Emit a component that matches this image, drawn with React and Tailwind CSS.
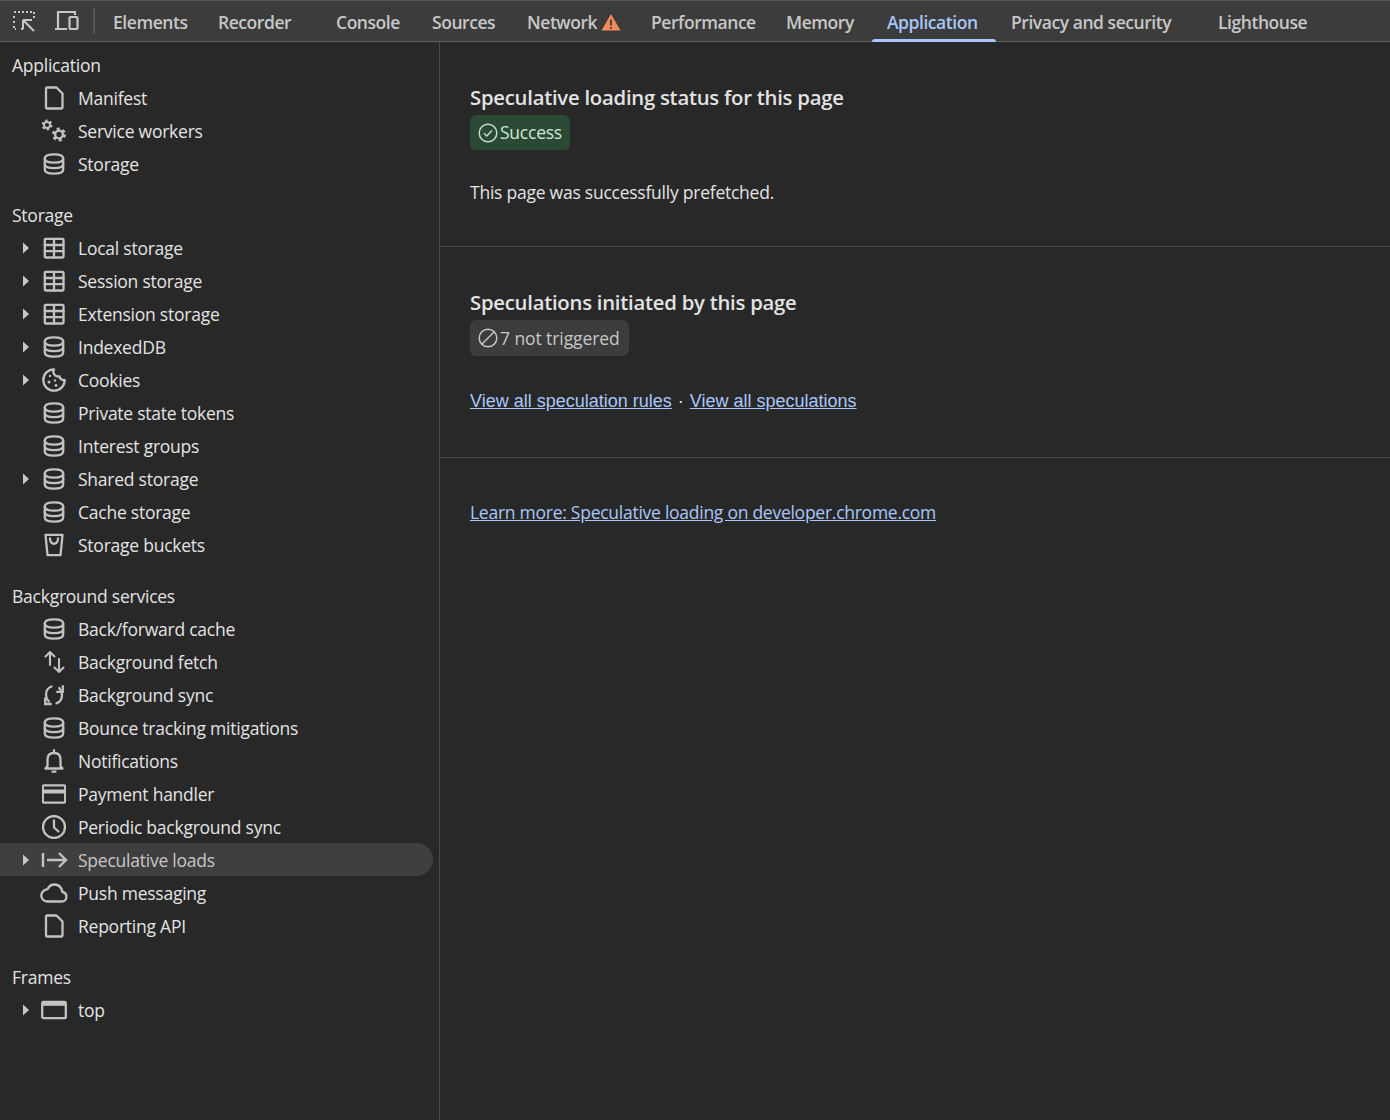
import React from "react";

const S = ({ children, w = 24, h = 24, className = "" }) => (
  <svg width={w} height={h} viewBox="0 0 24 24" fill="none" stroke="#c2c2c2" strokeWidth="2.300" strokeLinecap="round" strokeLinejoin="round" className={className}>
    {children}
  </svg>
);

const File = () => (
  <S><path d="M4 2.500a1 1 0 0 1 1-1h9.500L20.500 7.500V21.500a1 1 0 0 1-1 1H5a1 1 0 0 1-1-1z" /></S>
);
const Gear = ({ cx, cy, R }) => {
  const teeth = 2 * Math.PI * 0.82 * R / 6;
  return (
    <g>
      <circle cx={cx} cy={cy} r={R * 0.55} strokeWidth={R * 0.34} />
      <circle cx={cx} cy={cy} r={R * 0.82} strokeWidth={R * 0.36} strokeDasharray={`${teeth * 0.5} ${teeth * 0.5}`} strokeLinecap="butt" />
    </g>
  );
};
const Gears = () => (
  <S><Gear cx={5} cy={6} R={5.500} /><Gear cx={17} cy={15.500} R={7} /></S>
);
const Db = () => (
  <S>
    <path d="M2.800 6.500C2.800 3.800 7 2.300 12 2.300S21.200 3.800 21.200 6.500v11c0 2.700-4.200 4.200-9.200 4.200s-9.200-1.500-9.200-4.200z" />
    <path d="M2.800 6.500c0 2.700 4.200 4.200 9.200 4.200s9.200-1.500 9.200-4.200" />
    <path d="M2.800 12c0 2.700 4.200 4.200 9.200 4.200s9.200-1.500 9.200-4.200" />
  </S>
);
const Table = () => (
  <S>
    <rect x="2.800" y="2.800" width="18.700" height="18.700" rx="1" />
    <path d="M2.800 9h18.700M2.800 15.200h18.700M12 2.800v18.700" />
  </S>
);
const Cookie = () => (
  <S>
    <path d="M12 1.300a10.700 10.700 0 1 0 10.700 10.700 4.500 4.500 0 0 1-5.300-3.700 4.800 4.800 0 0 1-5.400-7z" />
    <circle cx="8" cy="8" r="1.200" fill="#c2c2c2" stroke="none" />
    <circle cx="7" cy="14" r="1.500" fill="#c2c2c2" stroke="none" />
    <circle cx="13" cy="12.500" r="1.200" fill="#c2c2c2" stroke="none" />
    <circle cx="14" cy="17.500" r="1.400" fill="#c2c2c2" stroke="none" />
  </S>
);
const Bucket = () => (
  <S>
    <path d="M3.500 1.800h17l-2 20.400H5.500z" />
    <path d="M8 5.500c0 7 8 7 8 0" />
  </S>
);
const UpDown = () => (
  <S>
    <path d="M8 15V2M3.500 6.500 8 2 12.500 6.500" strokeWidth="2.100" />
    <path d="M17 9v13M12.500 17.500 17 22l4.500-4.500" strokeWidth="2.100" />
  </S>
);
const Sync = () => (
  <S>
    <path d="M9.500 3.500C6 4.800 4 7.800 4 11.500c0 2.500.9 5 2.800 7" />
    <path d="M3.200 14.500v6.500h6.500" strokeLinejoin="miter" strokeLinecap="butt" />
    <path d="M14.500 20.300c3.500-1.300 5.500-4.500 5.500-8.300 0-2.500-.9-5-2.800-7" />
    <path d="M20.800 2.300v6.500h-6.500" strokeLinejoin="miter" strokeLinecap="butt" />
  </S>
);
const Bell = () => (
  <S>
    <path d="M3.500 19.500h17l-2-2.500v-6.500C18.500 6.500 16 4 12 4s-6.500 2.500-6.500 6.500V17z" />
    <path d="M12 1.200V4M10.500 22.700h3" />
  </S>
);
const Card = () => (
  <S>
    <rect x="0.800" y="3.300" width="22.400" height="17.400" rx="1.500" />
    <path d="M0.800 9.500h22.400" strokeWidth="4" strokeLinecap="butt" />
  </S>
);
const Clock = () => (
  <S>
    <circle cx="12" cy="12" r="11" />
    <path d="M12 5.500v7l4.500 4" />
  </S>
);
const Spec = () => (
  <svg width="28" height="24" viewBox="0 0 28 24" fill="none" stroke="#c2c2c2" strokeWidth="2.400" strokeLinecap="butt" strokeLinejoin="miter">
    <path d="M3 5v14M7 12h18.500M19 5l7 7-7 7" />
  </svg>
);
const Cloud = () => (
  <svg width="28" height="24" viewBox="0 0 28 24" fill="none" stroke="#c2c2c2" strokeWidth="2.300" strokeLinejoin="round">
    <path d="M7 20.500h15a4.800 4.800 0 0 0 .5-9.500C21.500 6.500 18.500 3.500 14.500 3.500c-3 0-5.500 1.700-7 4.700C4 9 1.300 11 1.300 14.800 1.300 17.800 4 20.500 7 20.500z" />
  </svg>
);
const Frame = () => (
  <svg width="26" height="24" viewBox="0 0 26 24" fill="none" stroke="#c2c2c2" strokeWidth="2.300" strokeLinejoin="round">
    <rect x="1.200" y="3.800" width="23.600" height="16.400" rx="1.500" />
    <path d="M1.200 6.300h23.600" strokeWidth="3" />
  </svg>
);
const Arrow = () => (
  <svg width="8" height="12" viewBox="0 0 8 12"><path d="M1 0.500 7 6 1 11.500z" fill="#c7c7c7" /></svg>
);

const groups = [
  { title: "Application", rows: [["Manifest", File], ["Service workers", Gears], ["Storage", Db]] },
  {
    title: "Storage",
    rows: [
      ["Local storage", Table, 1], ["Session storage", Table, 1], ["Extension storage", Table, 1],
      ["IndexedDB", Db, 1], ["Cookies", Cookie, 1], ["Private state tokens", Db],
      ["Interest groups", Db], ["Shared storage", Db, 1], ["Cache storage", Db], ["Storage buckets", Bucket],
    ],
  },
  {
    title: "Background services",
    rows: [
      ["Back/forward cache", Db], ["Background fetch", UpDown], ["Background sync", Sync],
      ["Bounce tracking mitigations", Db], ["Notifications", Bell], ["Payment handler", Card],
      ["Periodic background sync", Clock], ["Speculative loads", Spec, 1, 1], ["Push messaging", Cloud], ["Reporting API", File],
    ],
  },
  { title: "Frames", rows: [["top", Frame, 1]] },
];

const tabs = [
  ["Elements", "w-[105px]"],
  ["Recorder", "w-[118px]"],
  ["Console", "w-[96px]"],
  ["Sources", "w-[95px]"],
  ["Network", "w-[124px]"],
  ["Performance", "w-[135px]"],
  ["Memory", "w-[101px]"],
  ["Application", "w-[124px]"],
  ["Privacy and security", "w-[207px]"],
  ["Lighthouse", "w-[130px]"],
];

function Tabs() {
  return (
    <div className="flex h-[42px] items-center bg-[#3c3c3c] border-t border-b border-t-[#555555] border-b-[#5e5e5e] text-[#c7c7c7] text-[17.500px] font-semibold tracking-[-0.45px]">
      <div className="ml-[12px] flex items-center">
        <svg width="24" height="24" viewBox="0 0 24 24" fill="none" stroke="#c7c7c7" strokeWidth="2">
          <path d="M2 3h20v6M2 7v2M2 12v2M2 17v3h2M9 20h2" strokeDasharray="2 2" />
          <path d="M11 11h9M11 11v9M11 11l11 11" />
        </svg>
      </div>
      <div className="ml-[18px] flex items-center">
        <svg width="26" height="24" viewBox="0 0 26 24" fill="none" stroke="#c7c7c7" strokeWidth="2.200">
          <path d="M4 20V3h17v3M1 20h12" />
          <rect x="15.500" y="8" width="8" height="12" rx="1" />
        </svg>
      </div>
      <div className="ml-[13px] mr-[3px] h-[26px] w-[2px] bg-[#555555]" />
      {tabs.map(([t, w]) => {
        const on = t === "Application";
        return (
          <div key={t} className={`relative flex h-full items-center pl-[15px] pt-[2px] ${w} ${on ? "text-[#a8c7fa]" : ""}`}>
            <span className="whitespace-nowrap">{t}</span>
            {t === "Network" && (
              <svg width="20" height="18" viewBox="0 0 20 18" className="ml-[4px]">
                <path d="M10 1 19.500 17.500H.5z" fill="#f28b5c" />
                <path d="M10 6.500v6M10 14v1.800" stroke="#3c3c3c" strokeWidth="1.800" />
              </svg>
            )}
            {on && <div className="absolute bottom-[-1px] left-0 right-0 h-[3px] rounded-t-[3px] bg-[#a8c7fa]" />}
          </div>
        );
      })}
    </div>
  );
}

function Sidebar() {
  return (
    <aside className="w-[440px] shrink-0 border-r border-[#4a4a4a] pt-[6px] text-[#e3e3e3]">
      {groups.map((g) => (
        <section key={g.title} className="mb-[18px]">
          <div className="flex h-[33px] items-center pl-[12px] pt-[2px]">{g.title}</div>
          {g.rows.map(([label, Icon, arrow, selected]) => (
            <div key={label} className={`flex h-[33px] items-center mr-[6px] rounded-r-full ${selected ? "bg-[#3f3f3f] text-[#c7c7c7]" : ""}`}>
              <span className="flex w-[40px] justify-center pl-[11px]">{arrow ? <Arrow /> : null}</span>
              <span className="flex w-[28px] justify-center">
                <Icon />
              </span>
              <span className="ml-[10px] whitespace-nowrap pt-[2px]">{label}</span>
            </div>
          ))}
        </section>
      ))}
    </aside>
  );
}

export default function App() {
  return (
    <div className="flex h-[1120px] flex-col overflow-hidden bg-[#282828] text-[17.500px] font-['Open_Sans','Noto_Sans',sans-serif] tracking-[-0.24px]">
      <Tabs />
      <div className="flex min-h-0 flex-1">
        <Sidebar />
        <main className="min-w-0 flex-1 text-[#e3e3e3]">
          <section className="h-[205px] border-b border-[#4a4a4a] pl-[30px] pt-[38px]">
            <h2 className="text-[20.300px] font-semibold leading-[35px] text-[#e3e3e3]">Speculative loading status for this page</h2>
            <div className="inline-flex h-[35px] items-center gap-[2px] rounded-[6px] bg-[#2b4a36] pl-[8px] pr-[8px] text-[#cfe6d6]">
              <svg width="20" height="20" viewBox="0 0 20 20" fill="none" stroke="#c4dccb" strokeWidth="1.500"><circle cx="10" cy="10" r="8.800" /><path d="M6 10.300 8.800 13 14 7.500" /></svg>
              <span>Success</span>
            </div>
            <p className="mt-[25px] leading-[34px]">This page was successfully prefetched.</p>
          </section>
          <section className="h-[211px] border-b border-[#4a4a4a] pl-[30px] pt-[38px]">
            <h2 className="text-[20.300px] font-semibold leading-[35px]">Speculations initiated by this page</h2>
            <div className="inline-flex h-[36px] items-center gap-[2px] rounded-[6px] bg-[#3c3c3c] pl-[8px] pr-[9px] text-[#c7c7c7]">
              <svg width="20" height="20" viewBox="0 0 20 20" fill="none" stroke="#c7c7c7" strokeWidth="1.500"><circle cx="10" cy="10" r="8.800" /><path d="M4 16 16 4" /></svg>
              <span className="tracking-[-0.08px]">7 not triggered</span>
            </div>
            <div className="mt-[28px] flex items-center font-['Liberation_Sans',sans-serif] text-[18px] tracking-normal leading-[34px] text-[#a8c7fa]">
              <a className="underline">View all speculation rules</a>
              <span className="mx-[6px] text-[#e3e3e3]">·</span>
              <a className="underline">View all speculations</a>
            </div>
          </section>
          <div className="pl-[30px] pt-[37px] leading-[34px]">
            <a className="text-[#a8c7fa] underline tracking-[-0.26px]">Learn more: Speculative loading on developer.chrome.com</a>
          </div>
        </main>
      </div>
    </div>
  );
}
